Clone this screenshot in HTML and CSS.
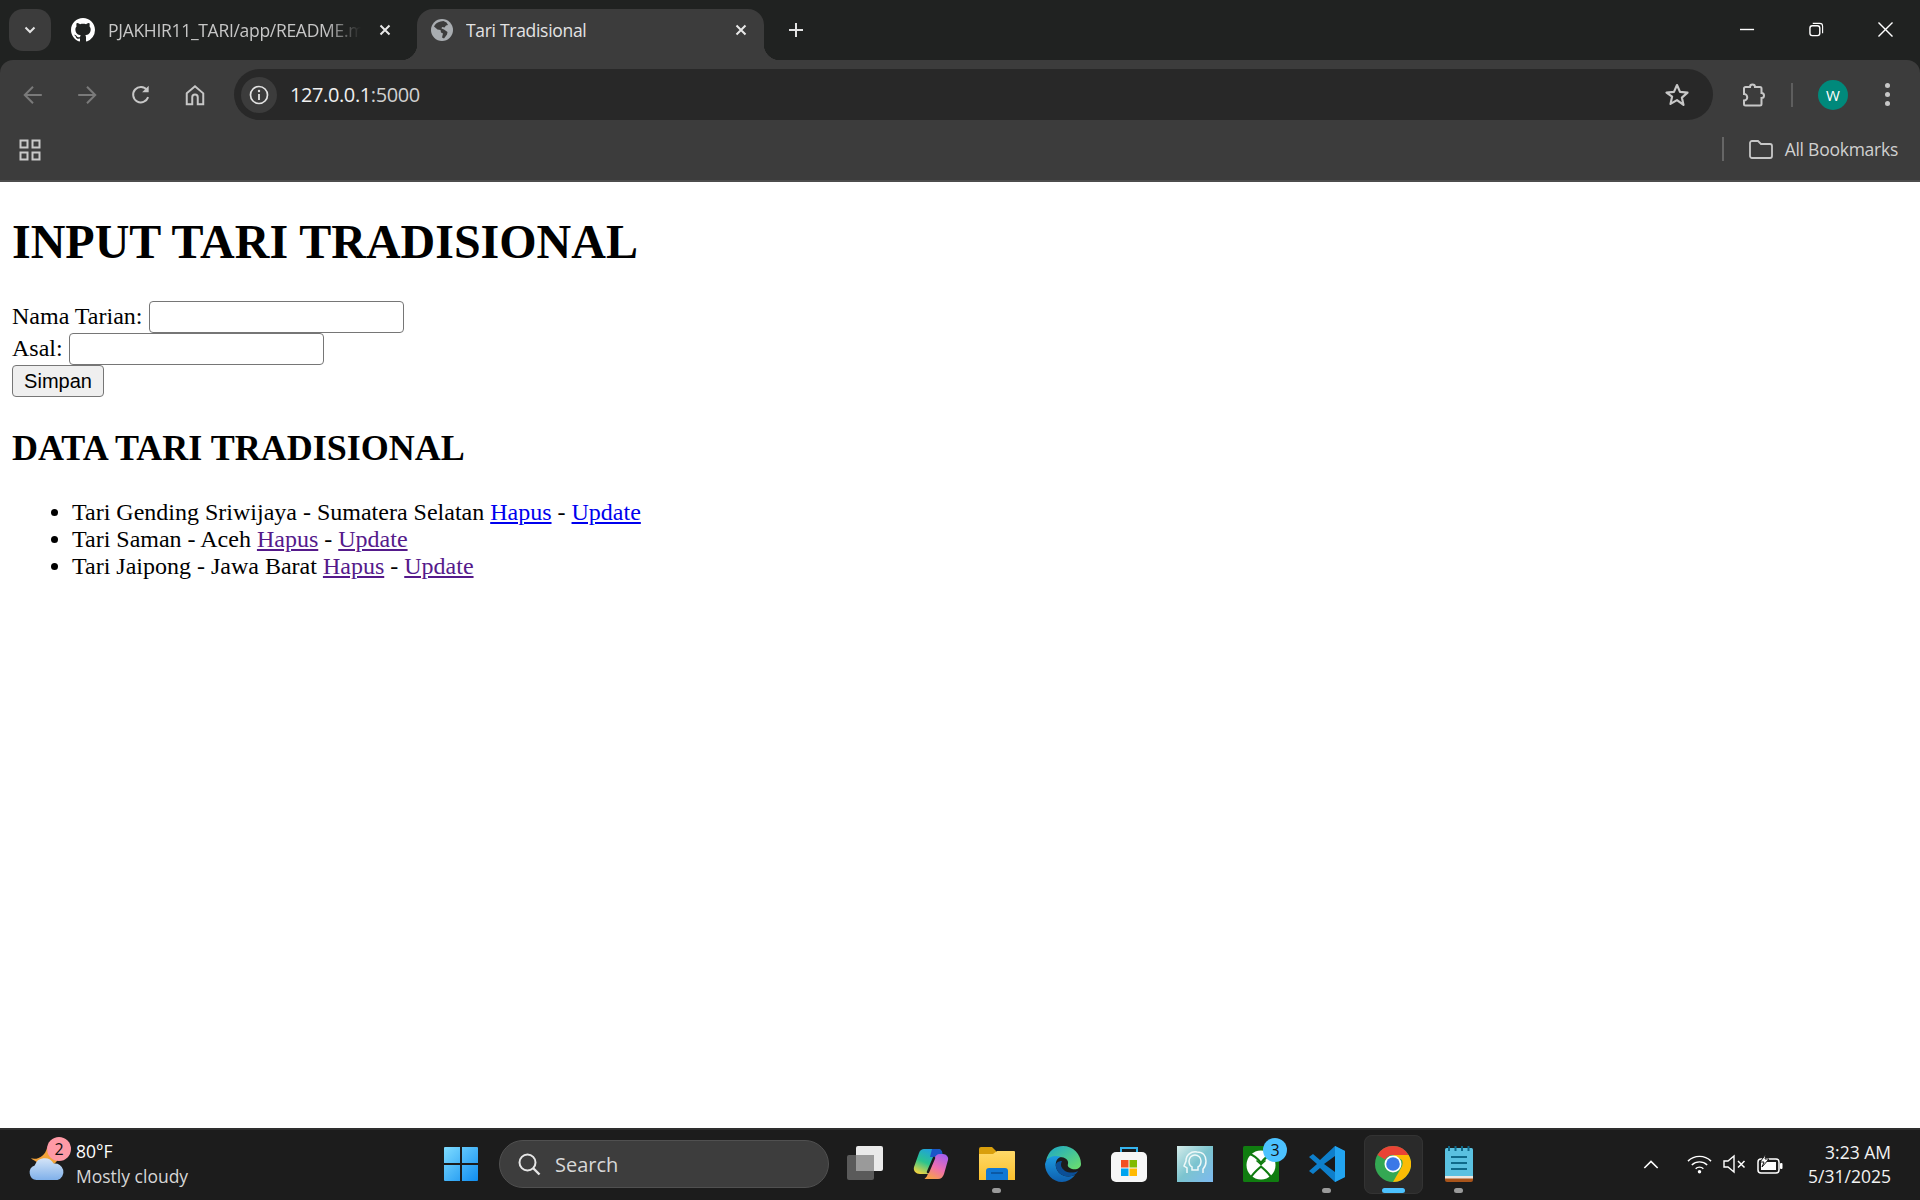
FILE: index.html
```html
<!DOCTYPE html>
<html lang="id">
<head>
<meta charset="utf-8">
<title>Tari Tradisional</title>
<link rel="stylesheet" href="styles.css">
</head>
<body>
<header class="chrome">
  <div class="tabstrip">
    <div class="tabsearch"><svg class="i14" viewBox="0 0 14 14"><path d="M2.500 4.500 7 9l4.500-4.500" fill="none" stroke="#e3e3e3" stroke-width="2"/></svg></div>
    <div class="tab">
      <svg class="fav" viewBox="0 0 16 16"><path fill="#fff" d="M8 0C3.580 0 0 3.580 0 8c0 3.540 2.290 6.530 5.470 7.590.4.070.55-.17.55-.38 0-.19-.01-.82-.01-1.490-2.010.37-2.530-.49-2.690-.94-.09-.23-.48-.94-.82-1.130-.28-.15-.68-.52-.01-.53.63-.01 1.080.58 1.230.82.720 1.210 1.870.87 2.330.66.070-.52.280-.87.510-1.070-1.780-.2-3.640-.89-3.640-3.950 0-.87.310-1.590.82-2.150-.08-.2-.36-1.020.08-2.120 0 0 .67-.21 2.200.82.640-.18 1.320-.27 2-.27s1.360.09 2 .27c1.530-1.040 2.200-.82 2.200-.82.440 1.100.160 1.920.08 2.120.51.560.82 1.270.82 2.150 0 3.070-1.870 3.750-3.650 3.950.29.250.54.730.54 1.480 0 1.070-.01 1.930-.01 2.200 0 .21.150.46.550.38A8.010 8.010 0 0 0 16 8c0-4.420-3.580-8-8-8z"/></svg>
      <span class="tabtext fade">PJAKHIR11_TARI/app/README.md at main</span>
      <svg class="tabx" viewBox="0 0 12 12"><path d="M1.500 1.500l9 9m0-9-9 9" stroke="#e8e8e8" stroke-width="2" fill="none"/></svg>
    </div>
    <div class="tab active">
      <svg class="fav globe" viewBox="0 0 22 22"><circle cx="11" cy="11" r="11" fill="#a9adb1"/><path fill="#3c3c3c" d="M9.500 2.500c-3 .5-5.500 2.500-6.500 5l3.500 3 3 .5.500 2.500 2 1-1 4 2 1 3-4 .500-2.500-3.500-2.500-2.500-1 .5-1.500 2.500.5 1.500-2 2-.5-1.500-2.500-3-1.500z"/></svg>
      <span class="tabtext">Tari Tradisional</span>
      <svg class="tabx" viewBox="0 0 12 12"><path d="M1.500 1.500l9 9m0-9-9 9" stroke="#e8e8e8" stroke-width="2" fill="none"/></svg>
    </div>
    <svg class="plus" viewBox="0 0 16 16"><path d="M8 1v14M1 8h14" stroke="#e3e3e3" stroke-width="2" fill="none"/></svg>
    <div class="winctl">
      <svg class="win" viewBox="0 0 16 16"><path d="M0 8h15" stroke="#fff" stroke-width="1.500" fill="none"/></svg>
      <svg class="win" viewBox="0 0 16 16"><rect x="1" y="4" width="10.500" height="10.500" rx="2.500" fill="none" stroke="#fff" stroke-width="1.500"/><path d="M4 1.500h7.500a3 3 0 0 1 3 3V12" fill="none" stroke="#fff" stroke-width="1.200"/></svg>
      <svg class="win" viewBox="0 0 16 16"><path d="M.5.500l15 15m0-15-15 15" stroke="#fff" stroke-width="1.500" fill="none"/></svg>
    </div>
  </div>
  <div class="toolbar">
    <div class="tbtn"><svg class="tic" viewBox="0 0 20 20"><path d="M18 10H3m7-7.500L2.500 10l7.500 7.500" fill="none" stroke="#7a7a7a" stroke-width="1.800"/></svg></div>
    <div class="tbtn"><svg class="tic" viewBox="0 0 20 20"><path d="M2 10h15m-7-7.500 7.500 7.500-7.500 7.500" fill="none" stroke="#7a7a7a" stroke-width="1.800"/></svg></div>
    <div class="tbtn"><svg class="tic" viewBox="0 0 20 20"><path d="M16.500 12a7 7 0 1 1-1-6.500" fill="none" stroke="#c7c7c7" stroke-width="1.800"/><path d="M17 1.500v6h-6z" fill="#c7c7c7"/></svg></div>
    <div class="tbtn"><svg class="tic" viewBox="0 0 20 20"><path d="M2.500 8.500 10 2l7.500 6.500V18.500h-5v-6.500a2.500 2.500 0 0 0-5 0v6.500h-5z" fill="none" stroke="#c7c7c7" stroke-width="1.800"/></svg></div>
    <div class="omnibox">
      <div class="chip"><svg class="info" viewBox="0 0 20 20"><circle cx="10" cy="10" r="8.500" fill="none" stroke="#e3e3e3" stroke-width="1.700"/><path d="M10 9v6" stroke="#e3e3e3" stroke-width="1.800"/><circle cx="10" cy="6" r="1.200" fill="#e3e3e3"/></svg></div>
      <span class="url">127.0.0.1<span class="port">:5000</span></span>
      <svg class="star" viewBox="0 0 24 24"><path d="M12 2.800l2.800 6.300 6.900.7-5.200 4.600 1.500 6.800L12 16.700l-6 3.500 1.500-6.800L2.300 9.800l6.900-.7z" fill="none" stroke="#c7c7c7" stroke-width="2" stroke-linejoin="round"/></svg>
    </div>
    <div class="tbtn puzzle"><svg class="pz" viewBox="0 0 24 24"><path d="M3 5.500a1.500 1.500 0 0 1 1.500-1.500H9a2.500 2.500 0 0 1 5 0h5a1.500 1.500 0 0 1 1.500 1.500V10a2.500 2.500 0 0 1 0 5v6a1.500 1.500 0 0 1-1.500 1.500H4.500A1.500 1.500 0 0 1 3 21v-3.500a3 3 0 0 0 0-6.500z" fill="none" stroke="#c7c7c7" stroke-width="2"/></svg></div>
    <div class="tsep"></div>
    <div class="tbtn"><div class="avatar">W</div></div>
    <div class="tbtn"><div class="dots"><i></i><i></i><i></i></div></div>
  </div>
  <div class="bookmarks">
    <svg class="apps" viewBox="0 0 22 22"><path d="M1.500 1.500h7v7h-7zm12 0h7v7h-7zm-12 12h7v7h-7zm12 0h7v7h-7z" fill="none" stroke="#c7c7c7" stroke-width="2"/></svg>
    <div class="bsep"></div>
    <svg class="folder" viewBox="0 0 24 19"><path d="M1 3a2 2 0 0 1 2-2h6l3 3h9a2 2 0 0 1 2 2v10a2 2 0 0 1-2 2H3a2 2 0 0 1-2-2z" fill="none" stroke="#c7c7c7" stroke-width="1.800"/></svg>
    <span class="allbm">All Bookmarks</span>
  </div>
</header>

<main class="page">
  <h1>INPUT TARI TRADISIONAL</h1>
  <form class="entry">
    <label>Nama Tarian: </label><input class="field" type="text"><br>
    <label>Asal: </label><input class="field" type="text"><br>
    <button class="save" type="button">Simpan</button>
  </form>
  <h2>DATA TARI TRADISIONAL</h2>
  <ul>
    <li>Tari Gending Sriwijaya - Sumatera Selatan <a class="fresh" href="#a">Hapus</a> - <a class="fresh" href="#b">Update</a></li>
    <li>Tari Saman - Aceh <a class="seen" href="#c">Hapus</a> - <a class="seen" href="#d">Update</a></li>
    <li>Tari Jaipong - Jawa Barat <a class="seen" href="#e">Hapus</a> - <a class="seen" href="#f">Update</a></li>
  </ul>
</main>

<footer class="taskbar">
  <div class="weather">
    <div class="wicon">
      <svg class="wsvg" viewBox="0 0 40 38">
        <defs><linearGradient id="cl" x1="0" y1="0" x2="0" y2="1"><stop offset="0" stop-color="#d4e4f7"/><stop offset="1" stop-color="#7fb0ea"/></linearGradient></defs>
        <path d="M20 2c1 7 5 12 11 13-4 7-14 8-20 3C8 16 5 15 3 13c8 2 15-3 17-11z" fill="#f2a33a"/>
        <path d="M9 36a8 8 0 0 1-2-15.500 11 11 0 0 1 20-2A9 9 0 0 1 31 36z" fill="url(#cl)"/>
      </svg>
      <span class="wbadge">2</span>
    </div>
    <div class="wtext"><span class="temp">80°F</span><span class="cond">Mostly cloudy</span></div>
  </div>
  <svg class="start" viewBox="0 0 34 34">
    <defs><linearGradient id="st" x1="0" y1="0" x2="1" y2="1"><stop offset="0" stop-color="#7fdcff"/><stop offset="1" stop-color="#0f8df0"/></linearGradient></defs>
    <path fill="url(#st)" d="M0 1a1 1 0 0 1 1-1h15v16H0zM18 0h15a1 1 0 0 1 1 1v15H18zM0 18h16v16H1a1 1 0 0 1-1-1zM18 18h16v15a1 1 0 0 1-1 1H18z"/>
  </svg>
  <div class="search">
    <svg class="sic" viewBox="0 0 24 24"><circle cx="10.500" cy="10.500" r="8" fill="none" stroke="#e6e6e6" stroke-width="2"/><path d="M16 16l6.500 6.500" stroke="#e6e6e6" stroke-width="2.400"/></svg>
    <span>Search</span>
  </div>
  <div class="apps-row">
    <div class="app"><svg class="aic" viewBox="0 0 36 36"><rect x="0" y="9" width="27" height="25" rx="2" fill="#5a5a5a"/><rect x="9" y="0" width="27" height="25" rx="2" fill="#f2f2f2" fill-opacity=".96"/><rect x="9" y="9" width="18" height="16" fill="#9a9a9a"/></svg></div>
    <div class="app"><svg class="aic" viewBox="0 0 36 36">
      <defs><linearGradient id="cp1" x1="0.700" y1="0" x2="0.200" y2="1"><stop offset="0" stop-color="#1e9ce8"/><stop offset=".55" stop-color="#2bc48e"/><stop offset="1" stop-color="#f5d33f"/></linearGradient><linearGradient id="cp2" x1="0.800" y1="0" x2="0.300" y2="1"><stop offset="0" stop-color="#a35ff0"/><stop offset=".55" stop-color="#ee6fb0"/><stop offset="1" stop-color="#f7a04a"/></linearGradient></defs>
      <path d="M11 3H25c3 0 5 3 4 6l-8 16c-1 2-3 3-5 3H7c-4 0-7-3-6-7L6 7c1-3 3-4 5-4z" fill="url(#cp1)"/>
      <path d="M19 3h6c3 0 5 3 4 6l-1 2H17z" fill="#1a56c8"/>
      <path d="M25 33H12c-1 0 1-1 2-3l7-17c1-3 3-5 6-5h3c3 0 6 3 5 6l-4 14c-1 3-3 5-6 5z" fill="url(#cp2)"/>
      <path d="M21 12l-6 14" stroke="#1a1a1a" stroke-width="2.500" stroke-linecap="round"/>
    </svg></div>
    <div class="app"><svg class="aic" viewBox="0 0 36 36">
      <defs><linearGradient id="fo" x1="0" y1="0" x2="0" y2="1"><stop offset="0" stop-color="#ffd968"/><stop offset="1" stop-color="#fbc02d"/></linearGradient></defs>
      <path d="M0 3a2 2 0 0 1 2-2h11l4 4v5H0z" fill="#d99f0c"/>
      <path d="M0 34V8h14l4-3h17a1 1 0 0 1 1 1v28z" fill="url(#fo)"/>
      <path d="M7 34V25a3 3 0 0 1 3-3h16a3 3 0 0 1 3 3v9z" fill="#1178d4"/>
      <path d="M12 27h12" stroke="#0a4f96" stroke-width="1.500"/>
    </svg></div>
    <div class="app"><svg class="aic" viewBox="0 0 36 36">
      <defs><linearGradient id="ed" x1="0" y1="0" x2="1" y2="1"><stop offset="0" stop-color="#1aa5c9"/><stop offset="1" stop-color="#6ee06a"/></linearGradient><linearGradient id="ed2" x1="0" y1="0" x2="0" y2="1"><stop offset="0" stop-color="#1d9ae0"/><stop offset="1" stop-color="#0e5fae"/></linearGradient></defs>
      <path d="M1 15C3 5 10 0 18 0c10 0 18 8 18 18 0 4-4 6-9 5-3-1-5-3-4-5 1-4-3-7-8-7-6 0-12 1-14 4z" fill="url(#ed)"/>
      <path d="M1 15c3-5 10-6 15-4-4 1-6 5-5 10 1 6 8 11 16 9l3-1c-3 4-8 7-13 7C8 36 0 28 0 18z" fill="url(#ed2)"/>
      <path d="M11 21c1 6 8 11 16 9 3-1 5-3 6-5-4 2-9 2-13 0-4-3-5-6-3-10-4 0-7 2-6 6z" fill="#0b4f97"/>
    </svg></div>
    <div class="app"><svg class="aic" viewBox="0 0 36 36">
      <path d="M10 7V2h16v5" fill="none" stroke="#35b4ef" stroke-width="2"/>
      <rect y="6" width="36" height="30" rx="5" fill="#f6f6f6"/>
      <rect x="10" y="14" width="7.500" height="7.500" fill="#f25022"/><rect x="18.500" y="14" width="7.500" height="7.500" fill="#7fba00"/><rect x="10" y="22.500" width="7.500" height="7.500" fill="#00a4ef"/><rect x="18.500" y="22.500" width="7.500" height="7.500" fill="#ffb900"/>
    </svg></div>
    <div class="app"><svg class="aic" viewBox="0 0 36 36">
      <defs><linearGradient id="bu" x1="0" y1="0" x2="1" y2="1"><stop offset="0" stop-color="#d5ecea"/><stop offset=".5" stop-color="#7cc4cf"/><stop offset="1" stop-color="#7cb9f0"/></linearGradient></defs>
      <rect width="36" height="36" fill="url(#bu)"/>
      <path d="M10 27V22l-3-2 2-5c0-6 5-10 11-9 6 0 9 4 9 9 0 4-1 6-3 8v4" fill="none" stroke="#eef8f8" stroke-width="1.500"/>
      <path d="M15 24v-3c-2-1-3-4-3-6a6 6 0 0 1 12 0c0 2-1 5-3 6v3z" fill="none" stroke="#eef8f8" stroke-width="1.500"/>
    </svg></div>
    <div class="app"><svg class="aic" viewBox="0 0 36 36">
      <rect width="36" height="36" rx="1.500" fill="#107c10"/>
      <circle cx="18" cy="19" r="14.500" fill="#fff"/>
      <path d="M6 8C11 9 15 13 18 17C21 13 25 9 30 8" fill="none" stroke="#107c10" stroke-width="2.200"/>
      <path d="M7 33C9 28 14 24 18 20.500C22 24 27 28 29 33" fill="none" stroke="#107c10" stroke-width="2.200"/>
      <path d="M13.500 14.500 18 18.500l4.500-4" fill="none" stroke="#107c10" stroke-width="1.500"/>
    </svg><span class="xbadge">3</span></div>
    <div class="app"><svg class="aic" viewBox="0 0 36 36">
      <path d="M26 0 36 5v26l-10 5L11 22l-7 6-4-3 8-7-8-7 4-3 7 6z" fill="#0e7fcb"/>
      <path d="M26 0 36 5v26l-10 5z" fill="#22a4f0"/>
      <path d="M26 10 15 18l11 8z" fill="#1a1a1a"/>
    </svg></div>
    <div class="app current"><svg class="aic" viewBox="0 0 36 36">
      <circle cx="18" cy="18" r="18" fill="#34a853"/>
      <path d="M18 0a18 18 0 0 1 15.600 9H18a9 9 0 0 0-8 4.500L2.400 9A18 18 0 0 1 18 0z" fill="#ea4335"/>
      <path d="M33.600 9A18 18 0 0 1 18 36l7.800-13.500A9 9 0 0 0 27 14l-9-5z" fill="#fbbc04"/>
      <circle cx="18" cy="18" r="8.500" fill="#fff"/><circle cx="18" cy="18" r="6.800" fill="#3b78e7"/>
    </svg></div>
    <div class="app"><svg class="aic" viewBox="0 0 36 36">
      <rect x="4" y="2" width="28" height="30" rx="1.500" fill="#5ac1e0"/>
      <path d="M4 30h28v4a2 2 0 0 1-2 2H6a2 2 0 0 1-2-2z" fill="#a9541a"/>
      <path d="M4 30h28v2.500H4z" fill="#ece7df"/>
      <path d="M8 0v5m6.500-5v5M21 0v5m6.500-5v5" stroke="#0f6a8a" stroke-width="2"/>
      <path d="M10 11h16M10 17h16M10 23h16" stroke="#0f6a8a" stroke-width="2"/>
    </svg></div>
  </div>
  <div class="tray">
    <svg class="chev" viewBox="0 0 18 12"><path d="M1.500 10 9 2.500 16.500 10" fill="none" stroke="#fff" stroke-width="1.800"/></svg>
    <svg class="wifi" viewBox="0 0 26 20"><path d="M1 7a17 17 0 0 1 24 0M5 11a11.500 11.500 0 0 1 16 0M9 15a5.500 5.500 0 0 1 8 0" fill="none" stroke="#fff" stroke-width="1.500"/><circle cx="13" cy="18" r="1.800" fill="#fff"/></svg>
    <svg class="spk" viewBox="0 0 24 20"><path d="M1 7v6h4l6 5V2L5 7z" fill="none" stroke="#fff" stroke-width="1.400"/><path d="M15 7l6.500 6.500m0-6.500L15 13.500" stroke="#fff" stroke-width="1.500"/></svg>
    <svg class="bat" viewBox="0 0 26 20"><rect x="1" y="5" width="21" height="14" rx="3" fill="none" stroke="#fff" stroke-width="1.500"/><rect x="4" y="8" width="15" height="8" fill="#fff"/><rect x="23" y="9" width="2.500" height="6" rx="1" fill="#fff"/><path d="M9 0 3 8h4l-2 5 7-8H8z" fill="#fff" stroke="#1c1c1c" stroke-width="1"/></svg>
    <div class="clock"><span>3:23 AM</span><span>5/31/2025</span></div>
  </div>
</footer>
</body>
</html>
```
FILE: styles.css
```css
* { box-sizing: border-box; }
html, body { margin: 0; height: 100%; }
body { display: flex; flex-direction: column; height: 1200px; overflow: hidden; background: #fff; color: #000; font-family: "Liberation Serif", serif; font-size: 24px; }
svg { display: block; flex: none; }

.chrome { flex: none; background: #202221; font-family: "Open Sans", "Noto Sans", sans-serif; color: #e3e3e3; }

.tabstrip { display: flex; align-items: flex-start; height: 60px; padding: 9px 0 0 9px; background: #202221; }
.tabsearch { width: 42px; height: 42px; border-radius: 14px; background: #3c3c3c; display: flex; align-items: center; justify-content: center; }
.i14 { width: 14px; height: 14px; }
.tab { position: relative; display: flex; align-items: center; flex: none; width: 366px; height: 51px; padding: 0 26px 9px 20px; font-size: 17.500px; }
.tab.active { width: 347px; background: #3c3c3c; border-radius: 16px 16px 0 0; padding: 0 17px 9px 14px; }
.tab.active::before, .tab.active::after { content: ""; position: absolute; bottom: 0; width: 16px; height: 16px; }
.tab.active::before { left: -16px; background: radial-gradient(circle at 0 0, #202221 16px, #3c3c3c 16.500px); }
.tab.active::after { right: -16px; background: radial-gradient(circle at 100% 0, #202221 16px, #3c3c3c 16.500px); }
.fav { width: 24px; height: 24px; }
.globe { width: 22px; height: 22px; }
.tabtext { margin-left: 13px; flex: 1; min-width: 0; white-space: nowrap; overflow: hidden; letter-spacing: -.3px; }
.fade { -webkit-mask-image: linear-gradient(90deg, #000 86%, transparent 100%); mask-image: linear-gradient(90deg, #000 86%, transparent 100%); color: #c7c7c7; }
.fade + .tabx { margin-left: 18px; }
.tabx { width: 12px; height: 12px; margin-left: 12px; }
.plus { width: 16px; height: 16px; margin: 13px 0 0 24px; }
.winctl { margin-left: auto; display: flex; align-items: center; height: 42px; margin-top: -1px; padding-right: 27px; gap: 54px; }
.win { width: 15px; height: 15px; }

.toolbar { display: flex; align-items: flex-start; height: 60px; padding: 9px 6px 0; background: #3c3c3c; border-radius: 13px 13px 0 0; }
.tbtn { width: 54px; height: 51px; flex: none; display: flex; align-items: center; justify-content: center; }
.tic { width: 22px; height: 22px; }
.omnibox { flex: 1; display: flex; align-items: center; height: 51px; margin-left: 12px; padding: 0 23px 0 7px; border-radius: 26px; background: #282828; }
.chip { width: 36px; height: 36px; border-radius: 50%; background: #3c3c3c; display: flex; align-items: center; justify-content: center; }
.info { width: 20px; height: 20px; }
.url { margin-left: 13px; flex: 1; font-size: 20px; color: #f0f0f0; letter-spacing: -.4px; }
.port { color: #d0d0d0; }
.star { width: 26px; height: 26px; }
.puzzle { margin-left: 13px; }
.pz { width: 24px; height: 24px; }
.tsep { width: 2px; height: 24px; margin: 14px 13px 0 11px; background: #5e5e5e; }
.avatar { width: 30px; height: 30px; border-radius: 50%; background: #00897b; color: #fff; font-size: 15px; display: flex; align-items: center; justify-content: center; }
.dots { display: flex; flex-direction: column; gap: 4px; }
.dots i { display: block; width: 5px; height: 5px; border-radius: 50%; background: #c7c7c7; }

.bookmarks { display: flex; align-items: center; height: 62px; padding: 0 22px 2px 19px; background: #3c3c3c; border-bottom: 2px solid #4c4c4c; }
.apps { width: 22px; height: 22px; margin-top: 2px; }
.bsep { width: 2px; height: 24px; margin-left: auto; background: #666; }
.folder { width: 24px; height: 19px; margin-left: 25px; }
.allbm { margin-left: 12px; font-size: 17.500px; color: #d0d0d0; letter-spacing: -.25px; }

.page { flex: 1; padding: 0 12px; min-height: 0; }
h1 { font-size: 48px; margin: 32.160px 0; font-weight: bold; }
h2 { font-size: 36px; margin: 29.880px 0; font-weight: bold; }
ul { margin: 24px 0; padding-left: 60px; }
.field { width: 255px; height: 32px; padding: 1px 3px; border: 1.500px solid #767676; border-radius: 4px; background: #fff; font: 20px "Liberation Sans", sans-serif; vertical-align: baseline; }
.save { width: 92px; height: 32px; padding: 0; border: 1.500px solid #767676; border-radius: 4px; background: #efefef; color: #000; font: 20px "Liberation Sans", sans-serif; display: inline-block; }
.fresh { color: #0000ee; }
.seen { color: #551a8b; }

.taskbar { flex: none; display: flex; align-items: center; height: 72px; padding-bottom: 2px; background: #1c1c1c; border-top: 2px solid #2e2e2e; font-family: "Open Sans", "Noto Sans", sans-serif; color: #fff; }
.weather { width: 444px; flex: none; display: flex; align-items: center; padding-left: 28px; }
.wicon { position: relative; width: 38px; height: 36px; }
.wsvg { width: 38px; height: 36px; }
.wbadge { position: absolute; top: -9px; right: -5px; width: 24px; height: 24px; border-radius: 50%; background: #ff9aa6; color: #111; font-size: 16px; line-height: 24px; text-align: center; }
.wtext { display: flex; flex-direction: column; margin-left: 10px; font-size: 17.500px; line-height: 25px; }
.cond { color: #d6d6d6; }
.start { width: 34px; height: 34px; }
.search { display: flex; align-items: center; width: 330px; height: 48px; margin-left: 21px; padding-left: 17px; border-radius: 24px; background: #3d3d3d; border: 1px solid #505050; font-size: 20px; color: #d8d8d8; }
.sic { width: 24px; height: 24px; margin-right: 14px; }
.apps-row { display: flex; margin-left: 3px; align-items: center; }
.app { position: relative; width: 66px; height: 59px; display: flex; align-items: center; justify-content: center; border-radius: 8px; }
.aic { width: 36px; height: 36px; }
.app:nth-child(3)::after, .app:nth-child(8)::after, .app:nth-child(10)::after { content: ""; position: absolute; left: 28px; bottom: 1px; width: 9px; height: 5px; border-radius: 3px; background: #9a9a9a; }
.current { background: #2a2a2a; outline: 1px solid #333; outline-offset: -1px; width: 59px; margin: 0 3.500px; }
.current::after { content: ""; position: absolute; left: 18px; bottom: 1px; width: 23px; height: 5px; border-radius: 3px; background: #4cc2ff; }
.xbadge { position: absolute; left: 35px; top: 3px; width: 24px; height: 24px; border-radius: 50%; background: #4cc2ff; color: #111; font-size: 16px; line-height: 24px; text-align: center; }
.tray { flex: 1; display: flex; align-items: center; padding-left: 151px; }
.chev { width: 16px; height: 11px; }
.wifi { width: 25px; height: 20px; margin-left: 28px; }
.spk { width: 24px; height: 20px; margin-left: 11px; }
.bat { width: 26px; height: 20px; margin-left: 10px; }
.clock { margin-left: auto; margin-right: 29px; display: flex; flex-direction: column; align-items: flex-end; font-size: 17.500px; line-height: 24px; color: #f2f2f2; }
```
